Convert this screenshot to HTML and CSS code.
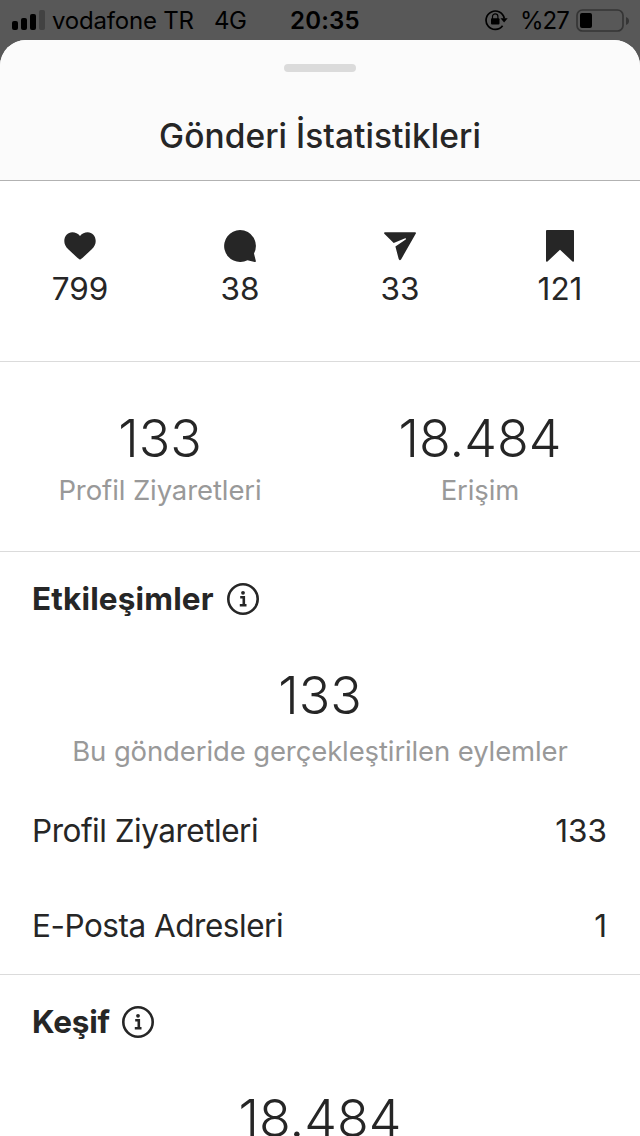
FILE: index.html
```html
<!DOCTYPE html>
<html lang="tr">
<head>
<meta charset="utf-8">
<title>Gönderi İstatistikleri</title>
<link rel="stylesheet" href="styles.css">
</head>
<body>
<div class="status">
  <svg class="signal" width="34" height="20" viewBox="0 0 34 20"><rect x="0" y="11" width="6" height="9" rx="2"/><rect x="9" y="8" width="6" height="12" rx="2"/><rect x="18" y="4" width="6" height="16" rx="2"/><rect x="27" y="0" width="6" height="20" rx="2" fill="#424242"/></svg>
  <span class="carrier">vodafone TR</span>
  <span class="network">4G</span>
  <span class="clock">20:35</span>
  <svg class="lock" width="24" height="22" viewBox="0 0 24 22"><path d="M17.600 16.800A9.200 9.200 0 1 1 19.300 9.500" fill="none" stroke="#000" stroke-width="1.7"/><path d="M15.500 9.200h7.200l-3.600 4.300z"/><rect x="6" y="9.200" width="8.500" height="6.300" rx="1"/><path d="M7.500 10V7.500a2.700 2.700 0 0 1 5.400 0V10" fill="none" stroke="#000" stroke-width="1.2"/></svg>
  <span class="percent">%27</span>
  <svg class="battery" width="54" height="24" viewBox="0 0 54 24"><rect x="1" y="1" width="46" height="21" rx="5.500" fill="none" stroke="#353535" stroke-width="1.7"/><rect x="4" y="4" width="12" height="15" rx="2"/><path d="M50 8q3 1.200 3 4t-3 4z" fill="#353535"/></svg>
</div>
<main class="sheet">
  <header class="head">
    <div class="grabber"></div>
    <h1 class="title">Gönderi İstatistikleri</h1>
  </header>
  <section class="counts">
    <div class="count"><svg width="32" height="32" viewBox="0 0 32 32"><path d="M16 29.400C15 29.400 14 28.200 12 26.500L4.500 19.500C1.500 16.700.3 14 .3 11 .3 6 3.800 2.300 8.300 2.300c3 0 5.700 1.200 7.700 3.800 2-2.600 4.700-3.800 7.700-3.800 4.500 0 8 3.700 8 8.700 0 3-1.200 5.700-4.200 8.500L20 26.500c-2 1.700-3 2.900-4 2.900z"/></svg><span>799</span></div>
    <div class="count"><svg width="32" height="32" viewBox="0 0 32 32"><path d="M16 0a16 16 0 1 0 7.500 30.200l7.200 1.700q1.500.3 1.100-1.200l-1.800-7.100A16 16 0 0 0 16 0z"/></svg><span>38</span></div>
    <div class="count"><svg width="32" height="32" viewBox="0 0 32 32"><path d="M1 2.200h30q1.500.2.700 1.600L17.200 29.200q-1.600 2-2.500-.2L11.400 16.600 21.700 9.500q1.100-1.100-.5-1.200L9.700 12.900.3 3.800Q-.4 2.500 1 2.200z"/></svg><span>33</span></div>
    <div class="count"><svg width="32" height="32" viewBox="0 0 32 32"><path d="M3 0h26q1 0 1 1v30q-.3 1.300-1.500.5L16 19.700 3.500 31.500Q2.300 32.300 2 31V1q0-1 1-1z"/></svg><span>121</span></div>
  </section>
  <section class="totals">
    <div class="total"><div class="big">133</div><div class="label">Profil Ziyaretleri</div></div>
    <div class="total"><div class="big">18.484</div><div class="label">Erişim</div></div>
  </section>
  <section class="actions">
    <h2 class="heading"><span class="wide">Etkileşimler</span><svg width="32" height="32" viewBox="0 0 32 32"><circle cx="16" cy="16" r="14.700" fill="none" stroke="#262626" stroke-width="2.600"/><circle cx="16" cy="9.800" r="1.900"/><path d="M13.200 14.200h3.600v8M12.800 22.300h6.700" fill="none" stroke="#262626" stroke-width="2.600"/></svg></h2>
    <div class="big">133</div>
    <div class="label">Bu gönderide gerçekleştirilen eylemler</div>
    <div class="row first"><span>Profil Ziyaretleri</span><span class="value">133</span></div>
    <div class="row second"><span>E-Posta Adresleri</span><span class="value">1</span></div>
  </section>
  <section class="discovery">
    <h2 class="heading"><span class="short">Keşif</span><svg width="32" height="32" viewBox="0 0 32 32"><circle cx="16" cy="16" r="14.700" fill="none" stroke="#262626" stroke-width="2.600"/><circle cx="16" cy="9.800" r="1.900"/><path d="M13.200 14.200h3.600v8M12.800 22.300h6.700" fill="none" stroke="#262626" stroke-width="2.600"/></svg></h2>
    <div class="big">18.484</div>
  </section>
</main>
</body>
</html>
```
FILE: styles.css
```css
* { box-sizing: border-box; }
html, body { margin: 0; height: 1136px; overflow: hidden; }
body { width: 640px; background: #585858; color: #262626; font-family: Inter, "Liberation Sans", sans-serif; }
svg { display: block; flex: none; fill: #262626; }
.status { height: 40px; display: flex; align-items: center; padding: 1px 0 0 12px; color: #000; font-size: 24px; line-height: 30px; white-space: nowrap; }
.status svg { fill: #000; }
.status .signal { margin-bottom: 1px; }
.status .lock { margin: 0 12px 1px 1px; }
.carrier { width: 162px; padding-left: 6px; letter-spacing: -.2px; }
.network { width: 82px; padding-left: 6px; letter-spacing: -.5px; }
.clock { width: 194px; font-weight: 600; letter-spacing: .2px; }
.percent { width: 55px; margin-left: -1px; margin-right: 1px; letter-spacing: -1px; }
.sheet { height: 1096px; background: #fff; border-radius: 26px 26px 0 0; overflow: hidden; }
.head { height: 141px; background: #fbfbfb; border-bottom: 1px solid #b2b2b2; padding-top: 24px; text-align: center; }
.grabber { width: 72px; height: 8px; border-radius: 4px; background: #dbdbdb; margin: 0 auto 44px; }
.title { margin: 0; font-size: 33.5px; line-height: 40px; font-weight: 550; letter-spacing: .05px; }
.counts { height: 181px; display: grid; grid-template-columns: repeat(4, 1fr); padding-top: 49px; border-bottom: 1px solid #dbdbdb; }
.count { display: flex; flex-direction: column; align-items: center; gap: 7px; font-size: 31.5px; line-height: 40px; }
.totals { height: 190px; display: grid; grid-template-columns: 1fr 1fr; padding-top: 47px; border-bottom: 1px solid #dbdbdb; }
.big { font-size: 52px; line-height: 60px; font-weight: 300; text-align: center; }
.label { font-size: 27.5px; line-height: 36px; margin-top: 3px; text-align: center; color: #999; letter-spacing: -.1px; }
.actions { height: 423px; border-bottom: 1px solid #dbdbdb; padding-top: 27px; }
.heading { display: flex; align-items: center; gap: 13px; margin: 0 0 47px; padding-left: 32px; font-size: 31.5px; line-height: 40px; height: 40px; font-weight: 700; }
.wide { width: 182px; letter-spacing: .15px; }
.short { width: 77px; letter-spacing: -.2px; }
.actions .label { margin-top: 7px; letter-spacing: -.12px; }
.row { display: flex; justify-content: space-between; padding: 0 33px 0 32px; font-size: 31.5px; line-height: 40px; letter-spacing: -.48px; }
.value { letter-spacing: 0; }
.first { margin-top: 42px; }
.second { margin-top: 55px; }
.discovery { padding-top: 27px; }
```
